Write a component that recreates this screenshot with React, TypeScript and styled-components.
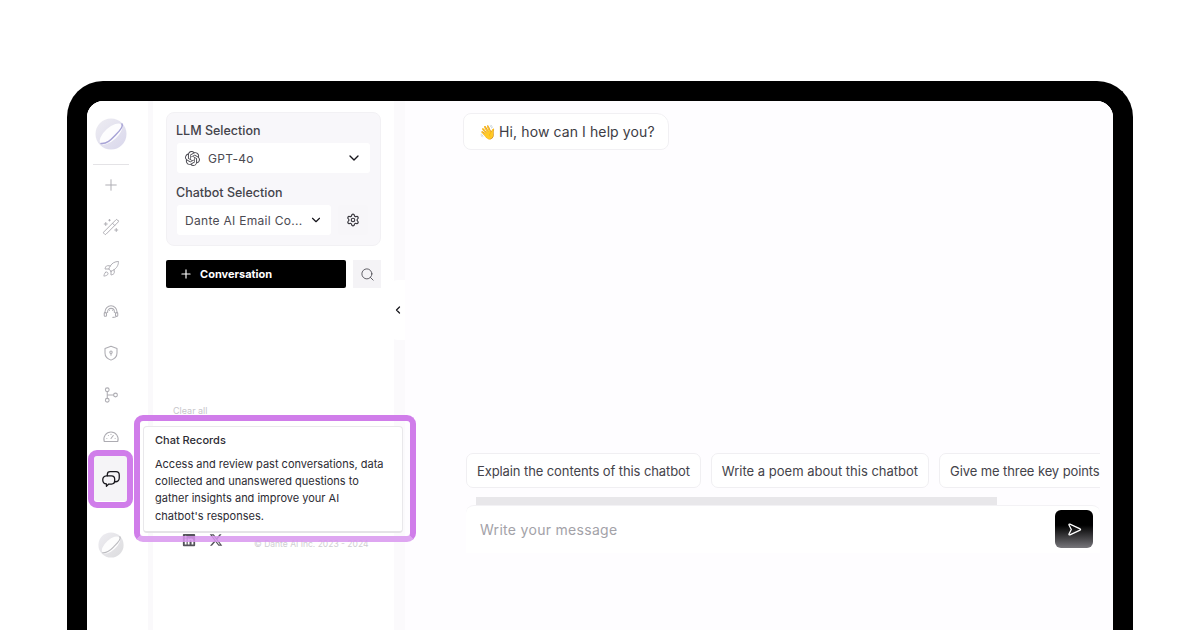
import React from "react";
import styled, { createGlobalStyle } from "styled-components";
import { Plus, WandSparkles, Rocket, Search, Settings, ChevronDown, ChevronLeft } from "lucide-react";
import { SiOpenai } from "react-icons/si";
import { FaXTwitter, FaLinkedin } from "react-icons/fa6";

const Global = createGlobalStyle`
  html, body { margin: 0; padding: 0; background: #fff; height: 630px; overflow: hidden; }
  * { box-sizing: border-box; }
  body { font-family: "Inter", "Noto Sans", sans-serif; color: #2c2b33; }
`;

const Page = styled.div`
  width: 1200px;
  height: 630px;
  padding: 81px 67px 0;
  overflow: hidden;
`;
const Frame = styled.div`
  position: relative;
  height: 549px;
  border: 20px solid #000;
  border-bottom: 0;
  border-radius: 36px 36px 0 0;
  background: #fefdff;
  overflow: hidden;
`;
const Screen = styled.div`
  display: flex;
  height: 100%;
  border-radius: 16px 16px 0 0;
  background: #fefdff;
  overflow: hidden;
`;
const Rail = styled.nav`
  width: 61px;
  flex: none;
  display: flex;
  flex-direction: column;
  align-items: center;
  padding-top: 17px;
  background: #fff;
`;
const RailRule = styled.div`
  width: 36px;
  height: 1px;
  margin: 14px 0 8px -13px;
  background: #e4e3e6;
`;
const RailItem = styled.div<{ $gap?: number }>`
  width: 40px;
  height: 24px;
  margin-bottom: ${(p) => p.$gap ?? 18}px;
  margin-left: -13px;
  display: flex;
  align-items: center;
  justify-content: center;
  color: #adacb2;
`;
const RailLogo = styled.div`
  height: 32px;
  margin-left: -13px;
`;
const ActiveItem = styled.div`
  width: 34px;
  height: 45px;
  margin: 7px 0 0 -13px;
  flex: none;
  display: flex;
  align-items: center;
  justify-content: center;
  background: #f5f4f7;
  border-radius: 4px;
  color: #17161c;
`;
const FootLogo = styled.div`
  margin: 31px 0 0 -13px;
`;
const Sidebar = styled.aside`
  width: 257px;
  flex: none;
  display: flex;
  flex-direction: column;
  padding: 11px 24px 0 13px;
  background: #fff;
  border-left: 5px solid #faf9fb;
  border-right: 11px solid #fbfafc;
  position: relative;
`;
const Panel = styled.section`
  width: 215px;
  flex: none;
  height: 134px;
  padding: 10px 10px 0;
  background: #f8f7fa;
  border: 1px solid #f2f1f4;
  border-radius: 8px;
`;
const Label = styled.div`
  margin-left: -1px;
  font-size: 12.5px;
  line-height: 16px;
  font-weight: 500;
  color: #44434a;
`;
const SelectBox = styled.div<{ $w: number }>`
  width: ${(p) => p.$w}px;
  flex: none;
  height: 30px;
  margin-top: 4px;
  display: flex;
  align-items: center;
  gap: 8px;
  padding: 0 8px;
  background: #fff;
  border-radius: 3px;
  font-size: 12px;
  color: #4b4a52;
  letter-spacing: 0.3px;
`;
const SelectText = styled.span`
  flex: 1;
  min-width: 0;
  white-space: nowrap;
`;
const Row = styled.div`
  display: flex;
  gap: 7px;
`;
const SquareBtn = styled.div`
  width: 30px;
  height: 30px;
  margin-top: 4px;
  flex: none;
  display: flex;
  align-items: center;
  justify-content: center;
  border-radius: 3px;
  background: #f7f6f9;
  color: #3a3940;
`;
const SecondLabel = styled(Label)`
  margin-top: 12px;
`;
const ActionRow = styled.div`
  display: flex;
  flex: none;
  gap: 7px;
  margin: 14px 0 0;
`;
const NewButton = styled.div`
  width: 180px;
  flex: none;
  height: 28px;
  display: flex;
  align-items: center;
  gap: 7px;
  padding-left: 13px;
  background: #000;
  border-radius: 2px;
  color: #fff;
  font-size: 11px;
  font-weight: 700;
`;
const SearchBtn = styled.div`
  width: 28px;
  flex: none;
  height: 28px;
  display: flex;
  align-items: center;
  justify-content: center;
  background: #f4f3f6;
  color: #4b4a52;
`;
const Clear = styled.div`
  margin: 117px 0 0 7px;
  font-size: 9px;
  line-height: 12px;
  color: #c6c5ca;
`;
const Footer = styled.div`
  display: flex;
  align-items: center;
  gap: 13px;
  margin: 114px 0 0 16px;
  font-size: 8.5px;
  color: #cfced3;
  white-space: nowrap;
`;
const Copy = styled.span`
  margin: 8px 0 0 18px;
`;
const Handle = styled.div`
  position: absolute;
  top: 179px;
  right: -11px;
  width: 15px;
  height: 60px;
  display: flex;
  align-items: center;
  justify-content: center;
  background: #fff;
  border-radius: 8px 0 0 8px;
  color: #17161c;
`;
const Main = styled.main`
  flex: 1;
  min-width: 0;
  display: flex;
  flex-direction: column;
  padding: 12px 13px 0 58px;
  background: #fefdff;
`;
const Greeting = styled.div`
  align-self: flex-start;
  height: 37px;
  flex: none;
  display: flex;
  align-items: center;
  gap: 3px;
  padding: 0 13px 0 15px;
  background: #fff;
  border: 1px solid #f1f0f3;
  border-radius: 8px 12px 8px 8px;
  font-size: 14px;
  letter-spacing: 0.1px;
  color: #3d3c44;
`;
const Suggestions = styled.div`
  display: flex;
  flex: none;
  gap: 10px;
  margin: 303px 0 0 3px;
  overflow: hidden;
`;
const Chip = styled.div<{ $track?: number }>`
  flex: none;
  height: 35px;
  display: flex;
  align-items: center;
  padding: 0 10px;
  background: #fff;
  border: 1px solid #f0eff2;
  border-radius: 7px;
  font-size: 13px;
  letter-spacing: ${(p) => p.$track ?? 0}px;
  color: #44434a;
  white-space: nowrap;
`;
const Scrollbar = styled.div`
  width: 521px;
  flex: none;
  height: 8px;
  margin: 9px 0 0 13px;
  background: #e8e7ea;
`;
const InputBar = styled.div`
  height: 48px;
  flex: none;
  margin-left: 3px;
  display: flex;
  align-items: flex-start;
  justify-content: space-between;
  padding: 4px 7px 0 14px;
  background: #fff;
  border-top: 1px solid #f3f2f5;
  border-radius: 8px 8px 0 0;
`;
const Placeholder = styled.div`
  margin-top: 11px;
  font-size: 14px;
  line-height: 18px;
  color: #a3a2a8;
  letter-spacing: 0.3px;
`;
const SendBtn = styled.div`
  width: 38px;
  height: 38px;
  display: flex;
  align-items: center;
  justify-content: center;
  border-radius: 6px;
  background: linear-gradient(180deg, #000 40%, #77767b 100%);
  color: #fff;
`;
const Highlight = styled.div`
  position: absolute;
  border: 6px solid #d07dea;
  border-radius: 9px;
  pointer-events: none;
`;
const RailHighlight = styled(Highlight)`
  left: 1px;
  top: 349px;
  width: 45px;
  height: 58px;
`;
const TipHighlight = styled(Highlight)`
  left: 47px;
  top: 314px;
  width: 282px;
  height: 127px;
  border-bottom-color: rgba(216, 150, 238, 0.85);
`;
const Tooltip = styled.div`
  position: absolute;
  left: 56px;
  top: 325px;
  width: 260px;
  height: 107px;
  padding: 6px 11px;
  background: #fff;
  border: 1px solid #e9e8eb;
  border-bottom: 2px solid #e4e3e6;
  border-radius: 4px;
  color: #2c2b33;
`;
const TipTitle = styled.div`
  font-size: 11px;
  line-height: 14px;
  font-weight: 500;
`;
const TipBody = styled.div`
  margin-top: 9px;
  font-size: 11px;
  line-height: 17.2px;
`;

const OrbLogo = ({ size, tone }: { size: number; tone: "violet" | "grey" }) => {
  const id = `orb-${tone}`;
  const stroke = tone === "violet" ? "#a7a3d6" : "#bcbcc0";
  return (
    <svg width={size} height={size} viewBox="0 0 32 32" aria-hidden="true">
      <defs>
        <linearGradient id={id} x1="0" y1="0" x2="1" y2="1">
          <stop offset="0" stopColor="#eeedf2" />
          <stop offset="1" stopColor={tone === "violet" ? "#d9d7ec" : "#dcdcde"} />
        </linearGradient>
      </defs>
      <circle cx="16" cy="16" r="15.5" fill={`url(#${id})`} />
      <ellipse cx="16" cy="16" rx="14" ry="6.500" transform="rotate(-42 16 16)" fill="#fff" opacity="0.9" />
      <path d="M6 25.500c7 .5 11-5 15-9s7.500-8 6-10.500" fill="none" stroke={stroke} strokeWidth="1.5" strokeLinecap="round" />
    </svg>
  );
};

const Line = ({ children, size = 18, weight = 1.4 }: { children: React.ReactNode; size?: number; weight?: number }) => (
  <svg width={size} height={size} viewBox="0 0 24 24" fill="none" stroke="currentColor" strokeWidth={weight} strokeLinecap="round" strokeLinejoin="round" aria-hidden="true">
    {children}
  </svg>
);

export default function App() {
  return (
    <Page>
      <Global />
      <Frame>
        <Screen>
          <Rail>
            <RailLogo><OrbLogo size={32} tone="violet" /></RailLogo>
            <RailRule />
            <RailItem><Plus size={18} strokeWidth={1.3} /></RailItem>
            <RailItem><WandSparkles size={18} strokeWidth={1.3} /></RailItem>
            <RailItem><Rocket size={18} strokeWidth={1.3} /></RailItem>
            <RailItem>
              <Line>
                <path d="M4 15v-2a8 8 0 0 1 16 0v2" />
                <path d="M7.500 14v-1a4.500 4.500 0 0 1 9 0v1" />
                <rect x="3" y="14" width="3" height="5" rx="1" />
                <rect x="18" y="14" width="3" height="5" rx="1" />
                <path d="M10 11h.01M14 11h.01M19.500 19c-1 1.200-3 1.500-5 1.500" />
              </Line>
            </RailItem>
            <RailItem>
              <Line>
                <path d="M12 3l8 3v6c0 5-3.500 8-8 9.500C7.500 20 4 17 4 12V6l8-3Z" />
                <circle cx="12" cy="11" r="1.600" />
                <path d="M12 12.600V15" />
              </Line>
            </RailItem>
            <RailItem>
              <Line>
                <circle cx="7" cy="5" r="2.500" />
                <circle cx="7" cy="19" r="2.500" />
                <circle cx="18" cy="12" r="2.500" />
                <path d="M7 7.500v9M7 12h8.500" />
              </Line>
            </RailItem>
            <RailItem $gap={0}>
              <Line>
                <path d="M3 18a9.500 9.500 0 1 1 18 0Z" />
                <path d="M12 14l3-4M6.500 14h.01M17.500 14h.01M8.500 10h.01M12 8.500h.01" />
              </Line>
            </RailItem>
            <ActiveItem>
              <Line size={22} weight={1.4}>
                <path d="M8 8.500V7a3 3 0 0 1 3-3h6.500A3.500 3.500 0 0 1 21 7.500V11a4 4 0 0 1-4 4h-1" />
                <path d="M7 8.500h5.500a3.500 3.500 0 0 1 3.500 3.500v2a3.500 3.500 0 0 1-3.500 3.500H9.500L7 20v-2.600A4.500 4.500 0 0 1 3 13a4.500 4.500 0 0 1 4-4.500Z" />
              </Line>
            </ActiveItem>
            <FootLogo><OrbLogo size={26} tone="grey" /></FootLogo>
          </Rail>
          <Sidebar>
            <Panel>
              <Label>LLM Selection</Label>
              <SelectBox $w={193}>
                <SiOpenai size={15} color="#4b4a52" />
                <SelectText>GPT-4o</SelectText>
                <ChevronDown size={16} color="#17161c" />
              </SelectBox>
              <SecondLabel>Chatbot Selection</SecondLabel>
              <Row>
                <SelectBox $w={154}>
                  <SelectText>Dante AI Email Co...</SelectText>
                  <ChevronDown size={14} color="#17161c" />
                </SelectBox>
                <SquareBtn><Settings size={14} /></SquareBtn>
              </Row>
            </Panel>
            <ActionRow>
              <NewButton><Plus size={14} />Conversation</NewButton>
              <SearchBtn><Search size={15} strokeWidth={1.4} /></SearchBtn>
            </ActionRow>
            <Clear>Clear all</Clear>
            <Footer>
              <FaLinkedin size={14} color="#55545b" />
              <FaXTwitter size={14} color="#55545b" />
              <Copy>© Dante AI Inc. 2023 - 2024</Copy>
            </Footer>
            <Handle><ChevronLeft size={12} strokeWidth={2.5} /></Handle>
          </Sidebar>
          <Main>
            <Greeting><span>👋</span>Hi, how can I help you?</Greeting>
            <Suggestions>
              <Chip $track={-0.1}>Explain the contents of this chatbot</Chip>
              <Chip>Write a poem about this chatbot</Chip>
              <Chip $track={-0.1}>Give me three key points</Chip>
            </Suggestions>
            <Scrollbar />
            <InputBar>
              <Placeholder>Write your message</Placeholder>
              <SendBtn>
                <Line size={17} weight={1.8}>
                  <path d="M5.500 4.500 20 11.200c.7.400.7 1.200 0 1.600L5.500 19.500c-.9.400-1.700-.4-1.300-1.200L7.500 12 4.200 5.700c-.4-.8.4-1.600 1.300-1.200Z" />
                </Line>
              </SendBtn>
            </InputBar>
          </Main>
        </Screen>
        <RailHighlight />
        <TipHighlight />
        <Tooltip>
          <TipTitle>Chat Records</TipTitle>
          <TipBody>
            Access and review past conversations, data<br />
            collected and unanswered questions to<br />
            gather insights and improve your AI<br />
            chatbot's responses.
          </TipBody>
        </Tooltip>
      </Frame>
    </Page>
  );
}
